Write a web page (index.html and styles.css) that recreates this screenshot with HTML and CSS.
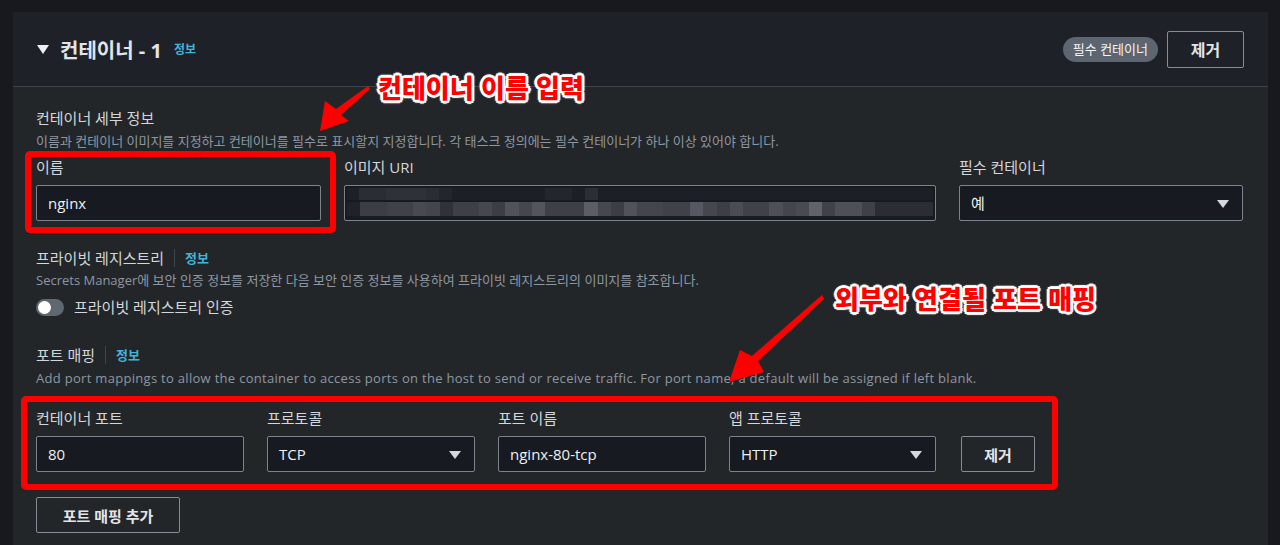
FILE: index.html
```html
<!DOCTYPE html>
<html lang="ko">
<head>
  <meta charset="UTF-8"/>
  <meta name="viewport" content="width=device-width, initial-scale=1.0"/>
  <title>컨테이너 - 1</title>
  <link rel="stylesheet" href="styles.css">
</head>
<body>
  <div class="page">
    <section class="panel">
      <header class="panel-header">
        <span class="caret"></span>
        <h2 class="panel-title">컨테이너 - 1</h2>
        <a class="info">정보</a>
        <div class="header-actions">
          <span class="badge">필수 컨테이너</span>
          <button class="btn btn-remove">제거</button>
        </div>
      </header>

      <div class="panel-body">
        <!-- 컨테이너 세부 정보 -->
        <div class="section">
          <h3 class="section-title">컨테이너 세부 정보</h3>
          <p class="desc">이름과 컨테이너 이미지를 지정하고 컨테이너를 필수로 표시할지 지정합니다. 각 태스크 정의에는 필수 컨테이너가 하나 이상 있어야 합니다.</p>
          <div class="detail-grid">
            <div class="field">
              <label>이름</label>
              <div class="input">nginx</div>
            </div>
            <div class="field">
              <label>이미지 URI</label>
              <div class="input input-blur"><span class="blur"></span></div>
            </div>
            <div class="field">
              <label>필수 컨테이너</label>
              <div class="input select">예</div>
            </div>
          </div>
        </div>

        <!-- 프라이빗 레지스트리 -->
        <div class="section section-gap">
          <h3 class="section-title">프라이빗 레지스트리 <span class="sep"></span> <a class="info">정보</a></h3>
          <p class="desc desc-tight">Secrets Manager에 보안 인증 정보를 저장한 다음 보안 인증 정보를 사용하여 프라이빗 레지스트리의 이미지를 참조합니다.</p>
          <div class="toggle-row">
            <span class="toggle"><span class="knob"></span></span>
            <span>프라이빗 레지스트리 인증</span>
          </div>
        </div>

        <!-- 포트 매핑 -->
        <div class="section section-gap-lg">
          <h3 class="section-title">포트 매핑 <span class="sep"></span> <a class="info">정보</a></h3>
          <p class="desc desc-en">Add port mappings to allow the container to access ports on the host to send or receive traffic. For port name, a default will be assigned if left blank.</p>
          <div class="port-grid">
            <div class="field">
              <label>컨테이너 포트</label>
              <div class="input">80</div>
            </div>
            <div class="field">
              <label>프로토콜</label>
              <div class="input select">TCP</div>
            </div>
            <div class="field">
              <label>포트 이름</label>
              <div class="input">nginx-80-tcp</div>
            </div>
            <div class="field">
              <label>앱 프로토콜</label>
              <div class="input select">HTTP</div>
            </div>
            <button class="btn btn-row">제거</button>
          </div>
          <button class="btn btn-add">포트 매핑 추가</button>
        </div>
      </div>
    </section>

    <!-- annotations -->
    <div class="red-box box-name"></div>
    <div class="red-box box-port"></div>
    <svg class="arrows" width="1280" height="545" viewBox="0 0 1280 545">
      <path d="M368 86 L370 89 L341 115 L349 121 L320 131 L325 101 L336 109 Z" fill="#ff0000"/>
      <path d="M822 295 L824 299 L758 361 L764 372 L729 382 L740 350 L752 356 Z" fill="#ff0000"/>
    </svg>
    <div class="note note-name">컨테이너 이름 입력</div>
    <div class="note note-port">외부와 연결될 포트 매핑</div>
  </div>
</body>
</html>
```

FILE: styles.css
```css
:root {
  --bg-outer: #17191e;
  --bg-header: #1e2128;
  --bg-body: #232629;
  --bg-input: #171a20;
  --border-input: #7b838d;
  --border-line: #3e444c;
  --text: #e2e5e8;
  --text-label: #d3d7db;
  --text-muted: #8d97a2;
  --link: #42b4d8;
  --red: #ff0000;
}

* {
  box-sizing: border-box;
}

body {
  margin: 0;
  background: var(--bg-outer);
  font-family: "Open Sans", "Noto Sans CJK KR", sans-serif;
  color: var(--text-label);
}

.page {
  position: relative;
  width: 1280px;
  height: 545px;
  padding: 12px 12px 0 13px;
  overflow: hidden;
}

.panel {
  background: var(--bg-body);
  height: 100%;
}

/* header */
.panel-header {
  display: flex;
  align-items: center;
  height: 75px;
  padding: 0 24px;
  background: var(--bg-header);
  border-bottom: 1px solid var(--border-line);
}

.caret {
  width: 0;
  height: 0;
  border-left: 6px solid transparent;
  border-right: 6px solid transparent;
  border-top: 9px solid #eef0f2;
  margin-right: 11px;
}

.panel-title {
  margin: 0;
  font-size: 20px;
  font-weight: 700;
  color: var(--text);
  margin-right: 12px;
}

.info {
  color: var(--link);
  font-size: 12px;
  font-weight: 700;
}

.header-actions {
  margin-left: auto;
  display: flex;
  align-items: center;
  gap: 9px;
}

.badge {
  background: #5c6570;
  color: #f4f5f6;
  font-size: 13px;
  line-height: 25px;
  height: 25px;
  padding: 0 10px;
  border-radius: 13px;
}

.btn {
  background: transparent;
  border: 1px solid #848d97;
  border-radius: 2px;
  color: var(--text);
  font-family: "Open Sans", "Noto Sans CJK KR", sans-serif;
  font-size: 15px;
  font-weight: 700;
  padding: 0;
}

.btn-remove {
  width: 77px;
  height: 37px;
  font-size: 16px;
}

/* body */
.panel-body {
  padding: 21px 24px 0 23px;
}

.section-title {
  margin: 0;
  font-size: 15px;
  font-weight: 400;
  line-height: 20px;
  color: var(--text-label);
  display: flex;
  align-items: center;
}

.section-title .info {
  margin-left: 10px;
  font-size: 13px;
}

.sep {
  display: inline-block;
  width: 1px;
  height: 18px;
  background: var(--border-line);
  margin-left: 10px;
}

.desc {
  margin: 5px 0 0;
  font-size: 13px;
  line-height: 16px;
  color: var(--text-muted);
}

.desc-tight {
  margin-top: 4px;
}

.desc-en {
  letter-spacing: 0.3px;
}

.section-gap {
  margin-top: 27px;
}

.section-gap-lg {
  margin-top: 28px;
}

.detail-grid {
  display: grid;
  grid-template-columns: 285px 592px 284px;
  column-gap: 23px;
  margin-top: 8px;
}

.field label {
  display: block;
  font-size: 15px;
  line-height: 20px;
  margin-bottom: 8px;
  color: var(--text-label);
}

.input {
  position: relative;
  height: 36px;
  background: var(--bg-input);
  border: 1px solid var(--border-input);
  border-radius: 2px;
  padding: 0 11px;
  font-size: 15px;
  line-height: 34px;
  color: #eef0f2;
}

.select::after {
  content: "";
  position: absolute;
  right: 13px;
  top: 14px;
  border-left: 6px solid transparent;
  border-right: 6px solid transparent;
  border-top: 8px solid #d5d9dd;
}

.input-blur {
  padding: 0;
}

.blur {
  position: absolute;
  left: 2px;
  right: 2px;
  top: 2px;
  bottom: 4px;
  background:
    linear-gradient(90deg,
      #1d2027 0 12px, #2a2d34 12px 39px, #2e3138 39px 79px, #2a2d33 79px 92px,
      #23262c 92px 105px, #1c1f25 105px 198px, #23262c 198px 225px, #1c1f25 225px 238px,
      #2b2e35 238px 251px, #1c1f25 251px 592px) top / 100% 12px no-repeat,
    linear-gradient(90deg,
      #1f2228 0 13px, #3b3e45 13px 40px, #3f4249 40px 66px, #474a51 66px 79px,
      #43464d 79px 93px, #2f3238 93px 106px, #3d4047 106px 132px, #45484f 132px 145px,
      #3b3e45 145px 158px, #50535a 158px 172px, #44474e 172px 185px, #52555c 185px 198px,
      #3d4047 198px 237px, #5b5e64 237px 251px, #45484f 251px 264px, #3b3e45 264px 277px,
      #50535a 277px 290px, #43464d 290px 316px, #3f4249 316px 343px, #555860 343px 356px,
      #44474e 356px 370px, #3c3f46 370px 383px, #4a4d54 383px 396px, #3f4249 396px 422px,
      #4d5057 422px 436px, #43464d 436px 449px, #484b52 449px 462px, #60636a 462px 475px,
      #3f4249 475px 488px, #4d5057 488px 515px, #3e4148 515px 528px, #2a2d33 528px 592px) 0 14px / 100% 16px no-repeat;
}

/* toggle */
.toggle-row {
  display: flex;
  align-items: center;
  gap: 10px;
  margin-top: 9px;
  font-size: 15px;
  line-height: 20px;
}

.toggle {
  position: relative;
  width: 28px;
  height: 17px;
  border-radius: 9px;
  background: #5f6770;
  padding: 2px;
}

.knob {
  display: block;
  width: 13px;
  height: 13px;
  border-radius: 50%;
  background: #ffffff;
}

/* port mapping */
.port-grid {
  display: grid;
  grid-template-columns: 208px 208px 208px 207px 76px;
  column-gap: 23px;
  align-items: end;
  margin-top: 22px;
}

.btn-row {
  height: 36px;
  margin-left: 2px;
}

.btn-add {
  display: block;
  margin-top: 25px;
  width: 144px;
  height: 36px;
}

/* annotations */
.red-box {
  position: absolute;
  border: 6px solid var(--red);
  border-radius: 5px;
}

.box-name {
  left: 25px;
  top: 151px;
  width: 311px;
  height: 82px;
}

.box-port {
  left: 21px;
  top: 396px;
  width: 1037px;
  height: 94px;
}

.arrows {
  position: absolute;
  left: 0;
  top: 0;
  pointer-events: none;
}

.note {
  position: absolute;
  font-family: "Noto Sans CJK KR", sans-serif;
  font-size: 26px;
  font-weight: 900;
  line-height: 30px;
  color: var(--red);
  white-space: nowrap;
  text-shadow:
    2px 0 0 #fff, -2px 0 0 #fff, 0 2px 0 #fff, 0 -2px 0 #fff,
    2px 2px 0 #fff, -2px -2px 0 #fff, 2px -2px 0 #fff, -2px 2px 0 #fff,
    3px 0 1px #fff, -3px 0 1px #fff, 0 3px 1px #fff, 0 -3px 1px #fff;
}

.note-name {
  left: 378px;
  top: 72px;
}

.note-port {
  left: 835px;
  top: 283px;
}
```
